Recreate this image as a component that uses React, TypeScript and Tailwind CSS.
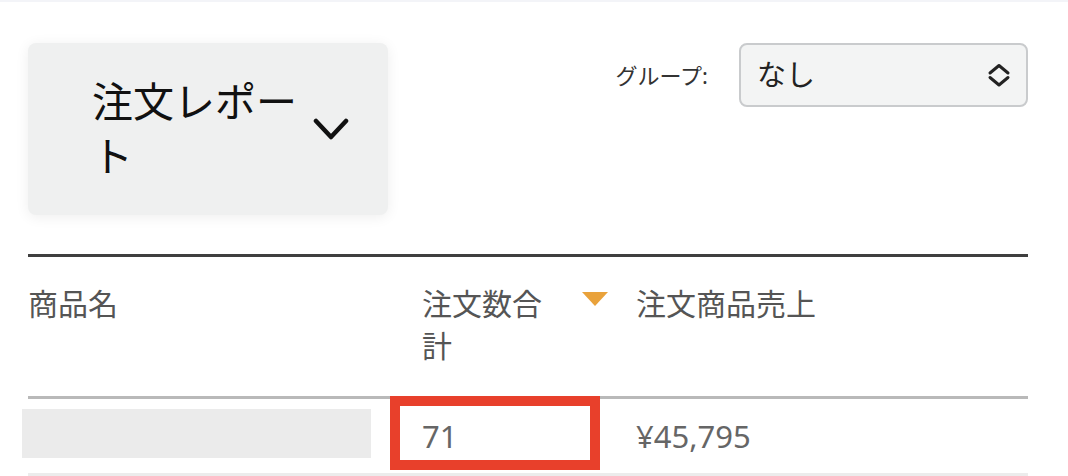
import { Fragment } from "react";

const font = "font-['Noto_Sans','Noto_Sans_CJK_JP',sans-serif]";

const ChevronDown = () => (
  <svg width="36" height="26" viewBox="0 0 36 26" fill="none" className="shrink-0 ml-[11px]">
    <path d="M3 5 L18 21 L33 5" stroke="#111" strokeWidth="4.5" strokeLinecap="round" strokeLinejoin="round" />
  </svg>
);

const UpDown = () => (
  <svg width="24" height="24" viewBox="0 0 24 24" fill="none">
    <path d="M3 10 L12 2.5 L21 10" stroke="#222" strokeWidth="3" strokeLinecap="round" strokeLinejoin="round" />
    <path d="M3 14.5 L12 22 L21 14.5" stroke="#222" strokeWidth="3" strokeLinecap="round" strokeLinejoin="round" />
  </svg>
);

const SortTriangle = () => (
  <svg width="26" height="14" viewBox="0 0 26 14" className="shrink-0 ml-[20px] mt-[9px]">
    <polygon points="0,0 26,0 13,14" fill="#e9a23b" />
  </svg>
);

const App = () => {
  return (
    <Fragment>
      <div className={`w-[1068px] h-[476px] overflow-hidden bg-white border-t-2 border-[#f3f4f8] pl-[28px] pr-[40px] ${font}`}>
        {/* top controls */}
        <div className="flex justify-between items-start pt-[41px]">
          <div className="w-[360px] h-[172px] rounded-lg bg-[#eff0f0] shadow-[0_2px_14px_rgba(0,0,0,0.07)] flex items-center pl-[64px]">
            <div className="w-[210px] text-[41px] leading-[55px] text-[#111]">注文レポート</div>
            <ChevronDown />
          </div>
          <div className="flex items-center gap-[31px]">
            <span className="text-[22px] text-[#333]">グループ:</span>
            <div className="w-[289px] h-[64px] rounded-lg border-2 border-[#c9cbcd] bg-[#f3f4f4] flex items-center justify-between pl-[16px] pr-[15px]">
              <span className="text-[29px] text-[#222]">なし</span>
              <UpDown />
            </div>
          </div>
        </div>

        {/* table */}
        <div className="mt-[39px] border-t-[3px] border-[#3f3f3f]">
          <div className="grid grid-cols-[394px_214px_1fr] pt-[26px] pb-[29px] text-[30px] leading-[42px] text-[#555]">
            <div>商品名</div>
            <div className="flex items-start">
              <div className="w-[140px]">注文数合計</div>
              <SortTriangle />
            </div>
            <div>注文商品売上</div>
          </div>
          <div className="relative grid grid-cols-[394px_214px_1fr] items-center h-[80px] border-t-[3px] border-b-[3px] border-t-[#b9b9b9] border-b-[#ececec] text-[31px] leading-[31px] text-[#666]">
            <div className="self-start mt-[10px] -ml-[6px] w-[349px] h-[49px] bg-[#ebebeb]" />
            <div>71</div>
            <div>¥45,795</div>
            <div className="absolute left-[362px] -top-[3px] w-[210px] h-[74px] border-[10px] border-[#e8402b]" />
          </div>
        </div>
      </div>
    </Fragment>
  );
};

export default App;
